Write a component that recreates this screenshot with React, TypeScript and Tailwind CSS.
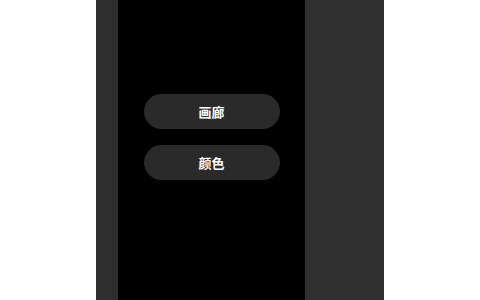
export default function App() {
  return (
    <div
      className="flex h-[300px] w-full justify-center bg-white"
      style={{ fontFamily: '"Noto Sans CJK SC", "Noto Sans", sans-serif' }}
    >
      <div className="flex h-full w-[288px] bg-[#2e2e2e] pl-[22px]">
        <div className="flex h-full w-[187px] flex-col items-center gap-4 bg-black pt-[94px]">
          <button className="h-[35px] w-[136px] rounded-full bg-[#2a2a2a] text-[13px] font-bold text-white">
            画廊
          </button>
          <button className="h-[35px] w-[136px] rounded-full bg-[#2a2a2a] text-[13px] font-bold text-white">
            颜色
          </button>
        </div>
        <div className="h-full flex-1 bg-[#303030]" />
      </div>
    </div>
  );
}
